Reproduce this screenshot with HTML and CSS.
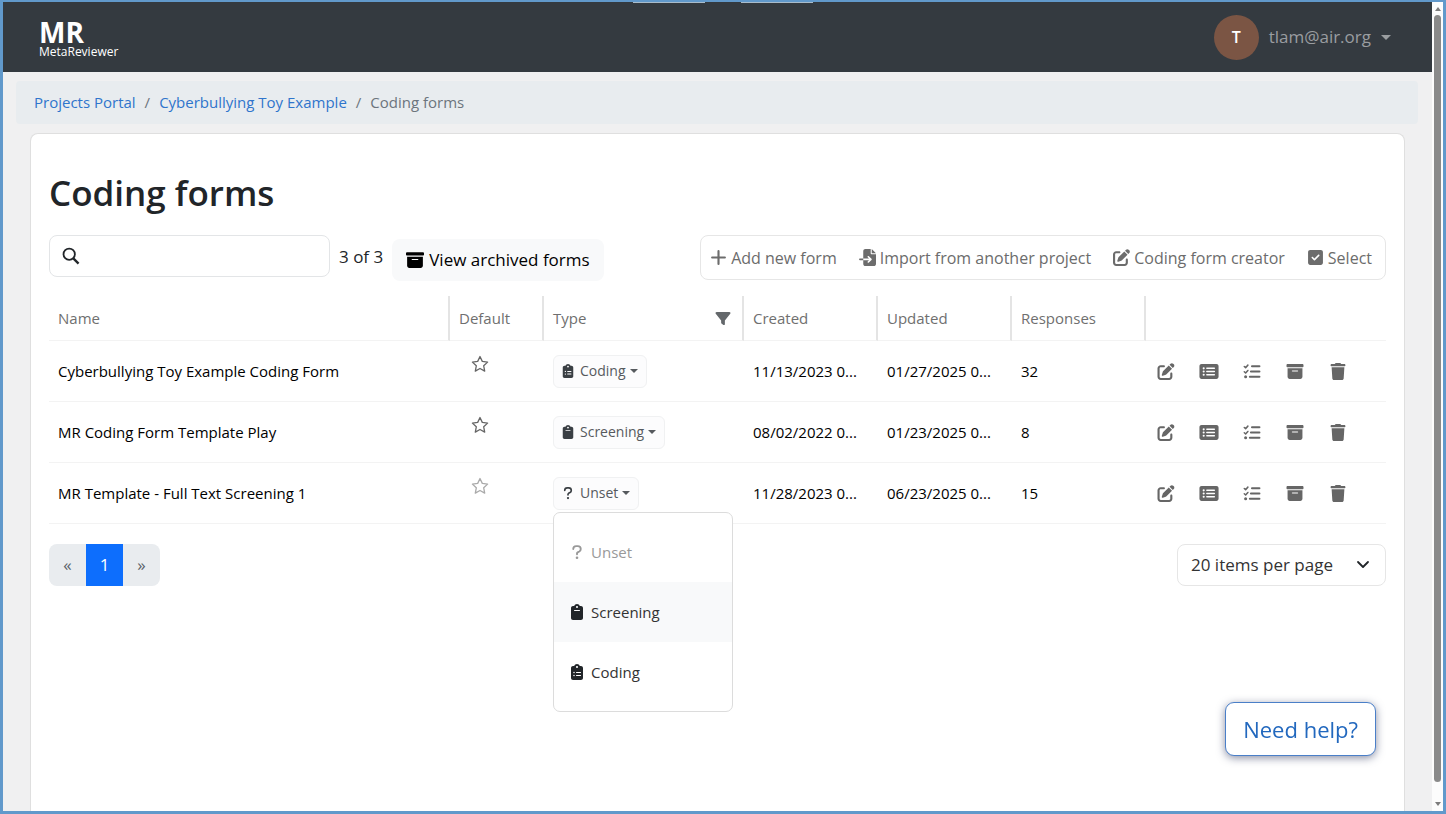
FILE: index.html
```html
<!DOCTYPE html>
<html lang="en">
<head>
    <meta charset="UTF-8">
    <meta name="viewport" content="width=device-width, initial-scale=1">
    <title>MetaReviewer</title>
    <link rel="stylesheet" href="styles.css">
</head>
<body>
<!-- icons, used further down with <use> -->
<svg class="sprite" aria-hidden="true">
    <symbol id="edit" viewBox="0 0 512 512"><path d="M471.6 21.7c-21.9-21.9-57.3-21.9-79.2 0L362.3 51.7l97.9 97.9 30.1-30.1c21.9-21.9 21.9-57.3 0-79.2L471.6 21.7zm-299.2 220c-6.1 6.1-10.8 13.6-13.5 21.9l-29.6 88.8c-2.9 8.6-.6 18.1 5.8 24.6s15.9 8.7 24.6 5.8l88.8-29.6c8.2-2.7 15.7-7.4 21.9-13.5L437.7 172.3 339.7 74.3 172.4 241.7zM96 64C43 64 0 107 0 160V416c0 53 43 96 96 96H352c53 0 96-43 96-96V320c0-17.7-14.3-32-32-32s-32 14.3-32 32v96c0 17.7-14.3 32-32 32H96c-17.7 0-32-14.3-32-32V160c0-17.7 14.3-32 32-32h96c17.7 0 32-14.3 32-32s-14.3-32-32-32H96z"/></symbol>
    <symbol id="list" viewBox="0 0 576 512"><path d="M0 96C0 60.7 28.7 32 64 32H512c35.3 0 64 28.7 64 64V416c0 35.3-28.7 64-64 64H64c-35.3 0-64-28.7-64-64V96zM128 288a32 32 0 1 0 0-64 32 32 0 1 0 0 64zm32-128a32 32 0 1 0 -64 0 32 32 0 1 0 64 0zM128 384a32 32 0 1 0 0-64 32 32 0 1 0 0 64zm96-248c-13.3 0-24 10.7-24 24s10.7 24 24 24H448c13.3 0 24-10.7 24-24s-10.7-24-24-24H224zm0 96c-13.3 0-24 10.7-24 24s10.7 24 24 24H448c13.3 0 24-10.7 24-24s-10.7-24-24-24H224zm0 96c-13.3 0-24 10.7-24 24s10.7 24 24 24H448c13.3 0 24-10.7 24-24s-10.7-24-24-24H224z"/></symbol>
    <symbol id="checks" viewBox="0 0 512 512"><path d="M24 104l40 36 68-76M24 264l40 36 68-76" fill="none" stroke="currentColor" stroke-width="46" stroke-linecap="round" stroke-linejoin="round"/><path d="M256 96h224M224 256h256M192 416h288" fill="none" stroke="currentColor" stroke-width="62" stroke-linecap="round"/><circle cx="64" cy="416" r="46"/></symbol>
    <symbol id="archive" viewBox="0 0 512 512"><path d="M32 32H480c17.7 0 32 14.3 32 32V96c0 17.7-14.3 32-32 32H32C14.3 128 0 113.7 0 96V64C0 46.3 14.3 32 32 32zm0 128H480V416c0 35.3-28.7 64-64 64H96c-35.3 0-64-28.7-64-64V160zm128 80c0 8.8 7.2 16 16 16H336c8.8 0 16-7.2 16-16s-7.2-16-16-16H176c-8.8 0-16 7.2-16 16z"/></symbol>
    <symbol id="trash" viewBox="0 0 448 512"><path d="M135.2 17.7L128 32H32C14.3 32 0 46.3 0 64S14.3 96 32 96H416c17.7 0 32-14.3 32-32s-14.3-32-32-32H320l-7.2-14.3C307.4 6.8 296.3 0 284.2 0H163.8c-12.1 0-23.2 6.8-28.6 17.7zM416 128H32L53.2 467c1.6 25.3 22.6 45 47.9 45H346.9c25.3 0 46.3-19.7 47.9-45L416 128z"/></symbol>
    <symbol id="clip" viewBox="0 0 384 512"><path fill-rule="evenodd" d="M192 0c-41.8 0-77.4 26.7-90.5 64H64C28.700 64 0 92.700 0 128V448c0 35.300 28.700 64 64 64H320c35.300 0 64-28.700 64-64V128c0-35.300-28.700-64-64-64H282.500C269.400 26.700 233.800 0 192 0zM192 60a34 34 0 1 1 0 68 34 34 0 1 1 0-68zM112 188H272a16 16 0 0 1 0 32H112a16 16 0 0 1 0-32z"/></symbol>
    <symbol id="cliplist" viewBox="0 0 384 512"><path fill-rule="evenodd" d="M192 0c-41.8 0-77.4 26.7-90.5 64H64C28.700 64 0 92.700 0 128V448c0 35.300 28.700 64 64 64H320c35.300 0 64-28.700 64-64V128c0-35.300-28.700-64-64-64H282.500C269.400 26.700 233.800 0 192 0zM192 60a34 34 0 1 1 0 68 34 34 0 1 1 0-68zM72 272a24 24 0 1 1 48 0 24 24 0 1 1-48 0zM72 368a24 24 0 1 1 48 0 24 24 0 1 1-48 0zM176 254H304a16 16 0 0 1 0 34H176a16 16 0 0 1 0-34zM176 350H304a16 16 0 0 1 0 34H176a16 16 0 0 1 0-34z"/></symbol>
    <symbol id="question" viewBox="0 0 320 512"><path d="M40 160c0-50 40-92 94-92h52c54 0 94 42 94 92 0 36-18 62-48 80l-50 28c-14 9-22 22-22 36v24" fill="none" stroke="currentColor" stroke-width="60" stroke-linecap="round"/><circle cx="160" cy="440" r="42"/></symbol>
    <symbol id="filter" viewBox="0 0 512 512"><path d="M3.9 54.9C10.5 40.9 24.5 32 40 32H472c15.5 0 29.500 8.900 36.100 22.900s4.600 30.500-5.200 42.500L320 320.900V448c0 12.100-6.800 23.200-17.700 28.600s-23.800 4.300-33.500-3l-64-48c-8.100-6-12.800-15.500-12.800-25.600V320.900L9 97.300C-.7 85.400-2.800 68.800 3.900 54.900z"/></symbol>
    <symbol id="star" viewBox="0 0 18 18"><path d="M9 1.500l2.300 4.900 5.300.7-3.900 3.700 1 5.300L9 13.500l-4.700 2.600 1-5.300L1.400 7.100l5.300-.7z" fill="none" stroke="currentColor" stroke-width="1.300" stroke-linejoin="round"/></symbol>
    <symbol id="search" viewBox="0 0 20 20"><circle cx="8" cy="8" r="6.300" fill="none" stroke="currentColor" stroke-width="2"/><path d="M12.600 12.600l5.800 5.800" stroke="currentColor" stroke-width="2.600"/></symbol>
    <symbol id="plus" viewBox="0 0 16 16"><path d="M8 2v12M2 8h12" stroke="currentColor" stroke-width="2" stroke-linecap="round"/></symbol>
    <symbol id="import" viewBox="0 0 512 512"><path d="M128 64c0-35.300 28.700-64 64-64H352V128c0 17.700 14.300 32 32 32H512V448c0 35.300-28.700 64-64 64H192c-35.300 0-64-28.700-64-64V336H302.100l-39 39c-9.400 9.400-9.400 24.600 0 33.900s24.600 9.400 33.900 0l80-80c9.400-9.400 9.400-24.600 0-33.900l-80-80c-9.400-9.400-24.600-9.400-33.900 0s-9.400 24.600 0 33.900l39 39H128V64zm0 224v48H24c-13.300 0-24-10.700-24-24s10.700-24 24-24H128zM512 128H384V0L512 128z"/></symbol>
    <symbol id="check" viewBox="0 0 448 512"><path d="M64 32C28.700 32 0 60.700 0 96V416c0 35.300 28.700 64 64 64H384c35.300 0 64-28.700 64-64V96c0-35.300-28.700-64-64-64H64zM337 209L209 337c-9.400 9.400-24.600 9.400-33.900 0l-64-64c-9.400-9.400-9.400-24.600 0-33.900s24.600-9.400 33.900 0l47 47L303 175c9.400-9.400 24.600-9.400 33.900 0s9.400 24.600 0 33.900z"/></symbol>
</svg>

<div class="window">
    <div class="page">
        <header class="navbar">
            <a class="brand" href="#"><b>MR</b><span>MetaReviewer</span></a>
            <button class="user" type="button"><span class="avatar">T</span>tlam@air.org<i class="caret"></i></button>
        </header>

        <nav class="breadcrumb" aria-label="Breadcrumb">
            <a href="#">Projects Portal</a><span>/</span><a href="#">Cyberbullying Toy Example</a><span>/</span><span>Coding forms</span>
        </nav>

        <main class="card">
            <h1>Coding forms</h1>

            <div class="toolbar">
                <label class="search">
                    <svg class="icon"><use href="#search"/></svg>
                    <input type="search" aria-label="Search forms">
                </label>
                <span class="count">3 of 3</span>
                <button class="archived" type="button"><svg class="icon"><use href="#archive"/></svg>View archived forms</button>
                <div class="tools">
                    <button type="button"><svg class="icon"><use href="#plus"/></svg>Add new form</button>
                    <button type="button"><svg class="icon"><use href="#import"/></svg>Import from another project</button>
                    <button type="button"><svg class="icon"><use href="#edit"/></svg>Coding form creator</button>
                    <button type="button"><svg class="icon"><use href="#check"/></svg>Select</button>
                </div>
            </div>

            <table class="forms">
                <colgroup>
                    <col>
                    <col class="col-default">
                    <col class="col-type">
                    <col class="col-date">
                    <col class="col-date">
                    <col class="col-date">
                    <col class="col-actions">
                </colgroup>
                <thead>
                    <tr>
                        <th>Name</th>
                        <th>Default</th>
                        <th><div class="th-type">Type<button class="plain" type="button" aria-label="Filter by type"><svg class="icon"><use href="#filter"/></svg></button></div></th>
                        <th>Created</th>
                        <th>Updated</th>
                        <th>Responses</th>
                        <th></th>
                    </tr>
                </thead>
                <tbody>
                    <tr>
                        <td>Cyberbullying Toy Example Coding Form</td>
                        <td class="default"><button class="plain" type="button" aria-label="Set as default"><svg class="icon"><use href="#star"/></svg></button></td>
                        <td><button class="type" type="button"><svg class="icon"><use href="#cliplist"/></svg>Coding<i class="caret"></i></button></td>
                        <td>11/13/2023 0...</td>
                        <td>01/27/2025 0...</td>
                        <td>32</td>
                        <td>
                            <div class="actions">
                                <button class="plain" type="button" aria-label="Edit"><svg class="icon"><use href="#edit"/></svg></button>
                                <button class="plain" type="button" aria-label="Details"><svg class="icon"><use href="#list"/></svg></button>
                                <button class="plain" type="button" aria-label="Responses"><svg class="icon"><use href="#checks"/></svg></button>
                                <button class="plain" type="button" aria-label="Archive"><svg class="icon"><use href="#archive"/></svg></button>
                                <button class="plain" type="button" aria-label="Delete"><svg class="icon"><use href="#trash"/></svg></button>
                            </div>
                        </td>
                    </tr>
                    <tr>
                        <td>MR Coding Form Template Play</td>
                        <td class="default"><button class="plain" type="button" aria-label="Set as default"><svg class="icon"><use href="#star"/></svg></button></td>
                        <td><button class="type" type="button"><svg class="icon"><use href="#clip"/></svg>Screening<i class="caret"></i></button></td>
                        <td>08/02/2022 0...</td>
                        <td>01/23/2025 0...</td>
                        <td>8</td>
                        <td>
                            <div class="actions">
                                <button class="plain" type="button" aria-label="Edit"><svg class="icon"><use href="#edit"/></svg></button>
                                <button class="plain" type="button" aria-label="Details"><svg class="icon"><use href="#list"/></svg></button>
                                <button class="plain" type="button" aria-label="Responses"><svg class="icon"><use href="#checks"/></svg></button>
                                <button class="plain" type="button" aria-label="Archive"><svg class="icon"><use href="#archive"/></svg></button>
                                <button class="plain" type="button" aria-label="Delete"><svg class="icon"><use href="#trash"/></svg></button>
                            </div>
                        </td>
                    </tr>
                    <tr>
                        <td>MR Template - Full Text Screening 1</td>
                        <td class="default"><button class="plain" type="button" aria-label="Set as default" disabled><svg class="icon"><use href="#star"/></svg></button></td>
                        <td>
                            <div class="dropdown">
                                <button class="type" type="button" aria-expanded="true"><svg class="icon"><use href="#question"/></svg>Unset<i class="caret"></i></button>
                                <div class="menu">
                                    <button type="button" disabled><svg class="icon"><use href="#question"/></svg>Unset</button>
                                    <button class="active" type="button"><svg class="icon"><use href="#clip"/></svg>Screening</button>
                                    <button type="button"><svg class="icon"><use href="#cliplist"/></svg>Coding</button>
                                </div>
                            </div>
                        </td>
                        <td>11/28/2023 0...</td>
                        <td>06/23/2025 0...</td>
                        <td>15</td>
                        <td>
                            <div class="actions">
                                <button class="plain" type="button" aria-label="Edit"><svg class="icon"><use href="#edit"/></svg></button>
                                <button class="plain" type="button" aria-label="Details"><svg class="icon"><use href="#list"/></svg></button>
                                <button class="plain" type="button" aria-label="Responses"><svg class="icon"><use href="#checks"/></svg></button>
                                <button class="plain" type="button" aria-label="Archive"><svg class="icon"><use href="#archive"/></svg></button>
                                <button class="plain" type="button" aria-label="Delete"><svg class="icon"><use href="#trash"/></svg></button>
                            </div>
                        </td>
                    </tr>
                </tbody>
            </table>

            <div class="footer">
                <nav class="pagination" aria-label="Pages">
                    <button type="button" disabled>«</button>
                    <button class="current" type="button">1</button>
                    <button type="button" disabled>»</button>
                </nav>
                <div class="per-page">
                    <select aria-label="Items per page">
                        <option>20 items per page</option>
                    </select>
                    <svg class="chevron" viewBox="0 0 16 16"><path d="M3 5l5 5 5-5" fill="none" stroke="currentColor" stroke-width="1.800" stroke-linecap="round" stroke-linejoin="round"/></svg>
                </div>
            </div>
        </main>
    </div>

    <div class="scrollbar" aria-hidden="true"><i class="up"></i><div class="thumb"></div><i class="down"></i></div>
    <div class="tabs" aria-hidden="true"><i></i><i></i></div>
</div>

<button class="help" type="button">Need help?</button>
</body>
</html>
```
FILE: styles.css
```css
* {
    box-sizing: border-box;
}
body {
    margin: 0;
    font-family: "Open Sans", "Noto Sans", sans-serif;
    font-size: 16px;
    line-height: 24px;
    color: #212529;
    background-color: #f0f0f1;
}
button, input, select {
    font: inherit;
    color: inherit;
}
button {
    padding: 0;
    border: none;
    background: none;
    white-space: nowrap;
    cursor: pointer;
}
a {
    color: #2f75cc;
    text-decoration: none;
}
.sprite {
    position: absolute;
    width: 0;
    height: 0;
}
.icon {
    display: block;
    flex: none;
    width: 18px;
    height: 18px;
    fill: currentColor;
}
.caret {
    border: 4px solid transparent;
    border-top-color: currentColor;
    border-bottom: none;
}

/* window frame */
.window {
    position: relative;
    display: flex;
    min-height: 100vh;
    border: 3px solid #6199cb;
    border-top-width: 2px;
}
.page {
    flex: 1;
    min-width: 0;
    display: flex;
    flex-direction: column;
}
.scrollbar {
    width: 11px;
    padding: 5px 2px;
    display: flex;
    flex-direction: column;
    align-items: center;
    gap: 4px;
    background: #fcfcfc;
}
.thumb {
    flex: 1;
    width: 7px;
    margin-bottom: 16px;
    border-radius: 4px;
    background: #8a8a8a;
}
.up, .down {
    border: 3px solid transparent;
}
.up {
    border-top: none;
    border-bottom: 4px solid #7c7c7c;
}
.down {
    border-bottom: none;
    border-top: 4px solid #7c7c7c;
}
.tabs {
    position: absolute;
    top: 0;
    left: 0;
    right: 0;
    display: flex;
    justify-content: center;
    gap: 36px;
}
.tabs i {
    width: 72px;
    height: 1px;
    background: #a9bccb;
}

/* top bar */
.navbar {
    display: flex;
    justify-content: space-between;
    align-items: center;
    height: 70px;
    padding: 0 41px 0 36px;
    background-color: #343a40;
}
.brand {
    display: flex;
    flex-direction: column;
    padding-top: 3px;
    color: #fff;
    font-size: 12px;
    line-height: 14px;
}
.brand b {
    font-size: 28px;
    line-height: 26px;
}
.user {
    display: flex;
    align-items: center;
    gap: 10px;
    color: #9a9da0;
    font-size: 17px;
}
.user .caret {
    border-width: 5px;
    border-bottom: none;
}
.avatar {
    width: 45px;
    height: 45px;
    border-radius: 50%;
    background-color: #7b5544;
    color: #fff;
    font-size: 16px;
    font-weight: 600;
    line-height: 45px;
}

.breadcrumb {
    display: flex;
    gap: 9px;
    margin: 9px 14px 9px 13px;
    padding: 9px 18px 10px;
    border-radius: 4px;
    background-color: #e8ecef;
    color: #6c757d;
    font-size: 15px;
}

.card {
    flex: 1;
    margin: 0 27px;
    padding: 35px 18px;
    border: 1px solid #dfdfdf;
    border-bottom: none;
    border-radius: 8px 8px 0 0;
    background-color: #fff;
}
h1 {
    margin: 0 0 18px;
    font-size: 35px;
    line-height: 48px;
    font-weight: 600;
}

/* search and tools */
.toolbar {
    display: flex;
    align-items: flex-start;
    gap: 9px;
    margin-bottom: 15px;
    font-size: 17px;
}
.search {
    display: flex;
    align-items: center;
    gap: 8px;
    width: 281px;
    height: 42px;
    padding: 0 12px;
    border: 1px solid #e3e5e7;
    border-radius: 8px;
}
.search input {
    flex: 1;
    min-width: 0;
    border: none;
    outline: none;
    background: none;
}
.count {
    padding-top: 10px;
}
.archived {
    display: flex;
    align-items: center;
    gap: 5px;
    height: 42px;
    margin-top: 4px;
    padding: 0 14px;
    border-radius: 8px;
    background-color: #f8f9fa;
    color: #000;
}
.tools {
    display: flex;
    gap: 22px;
    height: 45px;
    margin-left: auto;
    padding: 0 13px 0 9px;
    border: 1px solid #e6e6e6;
    border-radius: 8px;
    color: #6c6c6c;
    font-size: 16px;
}
.tools button {
    display: flex;
    align-items: center;
    gap: 4px;
}
.tools .icon {
    width: 17px;
    height: 17px;
}

/* table of forms */
.forms {
    width: 100%;
    table-layout: fixed;
    border-collapse: separate;
    border-spacing: 0;
    font-size: 15px;
    color: #000;
}
.col-default {
    width: 94px;
}
.col-type {
    width: 200px;
}
.col-date {
    width: 134px;
}
.col-actions {
    width: 240px;
}
.forms th, .forms td {
    padding: 0 9px;
    border-bottom: 1px solid #f3f3f3;
    text-align: left;
    white-space: nowrap;
}
.forms th {
    height: 45px;
    border-right: 2px solid #e4e4e4;
    color: #6f6f6f;
    font-weight: 400;
}
.forms th:last-child {
    border-right: none;
}
.forms td {
    height: 61px;
}
.th-type {
    display: flex;
    justify-content: space-between;
    align-items: center;
}
.th-type .icon {
    width: 20px;
    height: 15px;
    color: #64686b;
}
.plain {
    display: block;
    color: #666;
}
.forms .default {
    padding: 0 21px 14px;
}
.plain:disabled {
    color: #aaa;
}
.actions {
    display: flex;
    gap: 23px;
    padding-left: 1px;
}
.actions .icon {
    width: 20px;
    height: 17px;
}
.type {
    display: flex;
    align-items: center;
    gap: 4px;
    height: 33px;
    padding: 0 8px;
    border: 1px solid #f0f1f2;
    border-radius: 6px;
    background-color: #fcfcfd;
    color: #565a5e;
    font-size: 14px;
}
.type .icon {
    width: 12px;
    height: 14px;
    margin-right: 2px;
    color: #3a3f44;
}
.dropdown {
    position: relative;
}
.menu {
    position: absolute;
    top: 35px;
    left: 0;
    z-index: 1;
    width: 180px;
    padding: 9px 0;
    border: 1px solid #dcdcdc;
    border-radius: 7px;
    background-color: #fff;
}
.menu button {
    display: flex;
    align-items: center;
    gap: 7px;
    width: 100%;
    height: 60px;
    padding: 0 16px;
    color: #333;
}
.menu button:disabled {
    color: #999;
}
.menu .active {
    background-color: #f8f9fa;
}
.menu .icon {
    width: 14px;
    height: 16px;
}
.menu .active .icon, .menu .active ~ button .icon {
    color: #212529;
}

/* pagination */
.footer {
    display: flex;
    justify-content: space-between;
    margin-top: 20px;
    font-size: 17px;
}
.pagination {
    display: flex;
    height: 42px;
    border-radius: 8px;
    overflow: hidden;
}
.pagination button {
    width: 37px;
    background-color: #e9ecef;
    color: #5c636a;
}
.pagination .current {
    background-color: #0d6efd;
    color: #fff;
}
.per-page {
    position: relative;
    width: 209px;
}
.per-page select {
    appearance: none;
    width: 100%;
    height: 42px;
    padding: 0 13px;
    border: 1px solid #e6e6e6;
    border-radius: 8px;
    background-color: #fff;
    color: #333;
}
.chevron {
    position: absolute;
    top: 13px;
    right: 15px;
    width: 16px;
    height: 16px;
    pointer-events: none;
}

.help {
    position: fixed;
    right: 70px;
    bottom: 58px;
    height: 54px;
    padding: 0 17px;
    border: 1px solid #4a7fc8;
    border-radius: 9px;
    background-color: #fff;
    box-shadow: 0 2px 9px rgba(40, 50, 90, 0.55);
    color: #2268be;
    font-size: 22px;
}
```
